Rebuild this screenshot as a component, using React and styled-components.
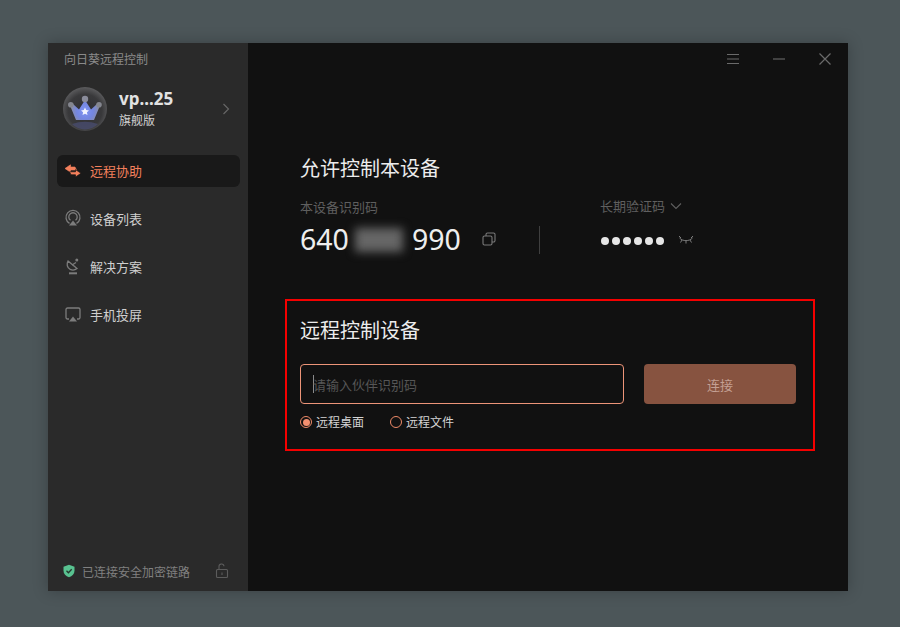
import React from 'react';
import styled, { createGlobalStyle } from 'styled-components';

const GlobalStyle = createGlobalStyle`
  html, body {
    margin: 0;
    padding: 0;
    background: #4c5659;
    font-family: "Noto Sans CJK SC", "Noto Sans", sans-serif;
  }
  * {
    box-sizing: border-box;
  }
`;

const Page = styled.div`
  width: 900px;
  height: 627px;
  padding: 43px 52px 36px 48px;
  background: #4c5659;
  overflow: hidden;
`;

const Window = styled.div`
  width: 800px;
  height: 548px;
  display: flex;
  box-shadow: 0 0 14px rgba(0, 0, 0, 0.25);
`;

const Sidebar = styled.aside`
  width: 200px;
  background: #2a2a2a;
  display: flex;
  flex-direction: column;
`;

const AppTitle = styled.div`
  height: 32px;
  padding-left: 16px;
  font-size: 12px;
  line-height: 32px;
  color: #8a8a8a;
`;

const Profile = styled.div`
  height: 44px;
  margin-top: 12px;
  padding: 0 18px 0 15px;
  display: flex;
  align-items: center;
  gap: 12px;
`;

const Avatar = styled.svg`
  width: 44px;
  height: 44px;
  flex: none;
`;

const ProfileText = styled.div`
  flex: 1;
  display: flex;
  flex-direction: column;
  gap: 2px;
  margin-top: -1px;
`;

const UserName = styled.div`
  font-family: "Noto Sans", sans-serif;
  font-size: 17px;
  line-height: 20px;
  font-weight: 700;
  color: #e2e2e2;
`;

const Plan = styled.div`
  font-size: 12px;
  line-height: 18px;
  color: #d0d0d0;
`;

const Nav = styled.nav`
  margin-top: 24px;
  padding: 0 8px 0 9px;
  display: flex;
  flex-direction: column;
  gap: 16px;
`;

const NavItem = styled.div`
  height: 32px;
  padding: 0 0 2px 7px;
  display: flex;
  align-items: center;
  gap: 8px;
  border-radius: 6px;
  font-size: 13px;
  color: ${p => (p.$active ? '#f4805c' : '#cfcfcf')};
  background: ${p => (p.$active ? '#191919' : 'transparent')};
`;

const NavIcon = styled.svg`
  width: 18px;
  height: 18px;
  flex: none;
`;

const Footer = styled.div`
  margin-top: auto;
  height: 40px;
  padding: 0 19px 0 14px;
  display: flex;
  align-items: center;
  font-size: 12px;
  color: #808080;
`;

const FooterText = styled.span`
  flex: 1;
  margin-left: 6px;
`;

const Main = styled.main`
  flex: 1;
  background: #111111;
  display: flex;
  flex-direction: column;
`;

const TitleBar = styled.div`
  height: 32px;
  padding-right: 16px;
  display: flex;
  justify-content: flex-end;
  align-items: center;
  gap: 32px;
`;

const BarIcon = styled.svg`
  width: 14px;
  height: 14px;
  display: block;
`;

const Content = styled.div`
  padding: 78px 33px 0 37px;
`;

const LocalSection = styled.section`
  padding-left: 15px;
  height: 146px;
`;

const SectionTitle = styled.h2`
  margin: 0;
  font-size: 20px;
  line-height: 30px;
  font-weight: 400;
  color: #ececec;
`;

const InfoRow = styled.div`
  margin-top: 14px;
  display: flex;
`;

const IdColumn = styled.div`
  width: 239px;
`;

const FieldLabel = styled.div`
  display: flex;
  align-items: center;
  gap: 5px;
  font-size: 13px;
  line-height: 20px;
  color: #5f5f5f;
`;

const IdLine = styled.div`
  margin-top: 4px;
  height: 36px;
  display: flex;
  align-items: center;
  font-family: "Noto Sans", sans-serif;
  font-size: 28.5px;
  color: #eeeeee;
`;

const BlurredDigits = styled.div`
  width: 48px;
  height: 24px;
  margin: 2px 9px 0 6px;
  background: #666666;
  filter: blur(5px);
`;

const CopyIcon = styled.svg`
  width: 16px;
  height: 16px;
  margin-left: 20px;
`;

const Divider = styled.div`
  width: 1px;
  height: 28px;
  margin-top: 29px;
  background: #3f3f3f;
`;

const CodeColumn = styled.div`
  margin-left: 60px;
  margin-top: -1px;
`;

const CodeLine = styled.div`
  margin: 7px 0 0 1px;
  height: 36px;
  display: flex;
  align-items: center;
`;

const Dot = styled.span`
  width: 8px;
  height: 8px;
  margin-right: 3px;
  border-radius: 50%;
  background: #e6e6e6;
`;

const EyeIcon = styled.svg`
  width: 16px;
  height: 10px;
  margin-left: 11px;
  margin-top: -2px;
`;

const RemoteSection = styled.section`
  width: 530px;
  height: 152px;
  padding: 14px 13px 0 13px;
  border: 2px solid #f50000;
`;

const ConnectRow = styled.div`
  margin-top: 19px;
  display: flex;
  gap: 20px;
`;

const PartnerInput = styled.div`
  width: 324px;
  height: 40px;
  padding-left: 12px;
  display: flex;
  align-items: center;
  border: 1px solid #ec9478;
  border-radius: 4px;
  font-size: 13px;
  color: #565656;
`;

const Caret = styled.span`
  width: 1px;
  height: 18px;
  margin-right: -1px;
  background: #8a8a8a;
`;

const ConnectButton = styled.button`
  width: 152px;
  height: 40px;
  padding: 0;
  border: none;
  border-radius: 4px;
  background: #875340;
  font-family: inherit;
  font-size: 13px;
  color: #c4a093;
`;

const ModeRow = styled.div`
  margin-top: 9px;
  display: flex;
  gap: 26px;
`;

const ModeOption = styled.label`
  display: flex;
  align-items: center;
  gap: 4px;
  font-size: 12px;
  line-height: 18px;
  color: #d4d4d4;
`;

const RadioMark = styled.span`
  width: 12px;
  height: 12px;
  display: flex;
  align-items: center;
  justify-content: center;
  border: 1.5px solid #ee8a68;
  border-radius: 50%;

  &::after {
    content: '';
    width: 7px;
    height: 7px;
    border-radius: 50%;
    background: ${p => (p.$checked ? '#f49070' : 'transparent')};
  }
`;

const NAV_ICONS = {
  remote: (
    <g strokeLinejoin="round">
      <path d="M1 7.500 6.500 3.800V6H11l1.500 3h-6v2.200z" fill="#f4805c" stroke="#f4805c" strokeWidth="0.6" />
      <path d="M17 12.300 11.500 16v-2.200H7L5.500 10.800h6V8.600z" fill="#f4805c" stroke="#191919" strokeWidth="0.7" />
    </g>
  ),
  devices: (
    <g fill="none" stroke="#7c7c7c" strokeWidth="1.300">
      <path d="M5.500 14.400a7 7 0 1 1 7 0" />
      <path d="M6.500 11.300a4.200 4.200 0 1 1 5 0" />
      <path d="M5 16.500h8L9 11.500z" fill="#7c7c7c" stroke="none" />
    </g>
  ),
  solutions: (
    <g fill="none" stroke="#7c7c7c" strokeWidth="1.300">
      <path d="M4 4c-1.800 3-.800 6.800 2.200 8.400 2.200 1.100 4.800.800 6.800-.900z" />
      <path d="M8 8l4-2.500" />
      <circle cx="12.800" cy="3" r="1.500" fill="#7c7c7c" stroke="none" />
      <path d="M5 16.300h8" strokeWidth="2" />
    </g>
  ),
  mirror: (
    <g fill="none" stroke="#7c7c7c" strokeWidth="1.300">
      <path d="M5 14H3.500A1.500 1.500 0 0 1 2 12.500V4.500A1.500 1.500 0 0 1 3.500 3h11A1.500 1.500 0 0 1 16 4.500v8a1.500 1.500 0 0 1-1.500 1.500H13" />
      <path d="M5 16.500h8L9 11.500z" fill="#7c7c7c" stroke="none" />
    </g>
  ),
};

const NAV_ITEMS = [
  { key: 'remote', label: '远程协助', active: true },
  { key: 'devices', label: '设备列表' },
  { key: 'solutions', label: '解决方案' },
  { key: 'mirror', label: '手机投屏' },
];

const CrownAvatar = () => (
  <Avatar viewBox="0 0 44 44">
    <defs>
      <radialGradient id="ball" cx="50%" cy="55%" r="55%">
        <stop offset="0%" stopColor="#2e2e32" />
        <stop offset="70%" stopColor="#39393b" />
        <stop offset="100%" stopColor="#5c5c5e" />
      </radialGradient>
      <radialGradient id="crown" gradientUnits="userSpaceOnUse" cx="22" cy="24" r="15">
        <stop offset="0%" stopColor="#7f94f4" />
        <stop offset="55%" stopColor="#7486e0" />
        <stop offset="100%" stopColor="#8d8f9e" />
      </radialGradient>
    </defs>
    <circle cx="22" cy="22" r="22" fill="url(#ball)" />
    <path d="M9 37a18 18 0 0 0 26 0 22 10 0 0 0-26 0z" fill="#4a4e72" opacity="0.75" />
    <path d="M7 18.500 10 17 16 22.500 22 13l6 9.500 6-5.500 3 1.500-6 14.500H13z" fill="url(#crown)" />
    <circle cx="22" cy="12" r="3.200" fill="#8a8c9b" />
    <circle cx="7.800" cy="17.800" r="2.800" fill="#84868f" />
    <circle cx="36" cy="17.800" r="2.800" fill="#84868f" />
    <path d="M22 20.500l1.200 2.600 2.800.300-2.100 1.900.600 2.800-2.500-1.400-2.500 1.400.600-2.800-2.100-1.900 2.800-.300z" fill="#f2f4ff" />
  </Avatar>
);

const App = () => (
  <>
    <GlobalStyle />
    <Page>
      <Window>
        <Sidebar>
          <AppTitle>向日葵远程控制</AppTitle>
          <Profile>
            <CrownAvatar />
            <ProfileText>
              <UserName>vp...25</UserName>
              <Plan>旗舰版</Plan>
            </ProfileText>
            <svg width="8" height="12" viewBox="0 0 8 12" fill="none" stroke="#666" strokeWidth="1.200">
              <path d="M1.500 1l5 5-5 5" />
            </svg>
          </Profile>
          <Nav>
            {NAV_ITEMS.map(item => (
              <NavItem key={item.key} $active={item.active}>
                <NavIcon viewBox="0 0 18 18">{NAV_ICONS[item.key]}</NavIcon>
                {item.label}
              </NavItem>
            ))}
          </Nav>
          <Footer>
            <svg width="14" height="14" viewBox="0 0 14 14">
              <path d="M7 .800 12.500 2.800v4c0 3.200-2.300 5.400-5.500 6.400C3.800 12.200 1.500 10 1.500 6.800v-4z" fill="#58c290" />
              <path d="M4.500 6.800 6.400 8.700 9.700 5.300" fill="none" stroke="#24382e" strokeWidth="1.300" />
            </svg>
            <FooterText>已连接安全加密链路</FooterText>
            <svg width="14" height="16" viewBox="0 0 14 16" fill="none" stroke="#5c5c5c" strokeWidth="1.100">
              <rect x="1.500" y="6.500" width="11" height="8" rx="1" />
              <path d="M4 6.500V3.800a2.500 2.500 0 0 1 5-.500" />
              <path d="M7 9.500v2.500" />
            </svg>
          </Footer>
        </Sidebar>
        <Main>
          <TitleBar>
            <BarIcon viewBox="0 0 14 14" fill="none" stroke="#6a6a6a" strokeWidth="1.100">
              <path d="M1 2.500h12M1 7h12M1 11.500h12" />
            </BarIcon>
            <BarIcon viewBox="0 0 14 14" fill="none" stroke="#6a6a6a" strokeWidth="1.100">
              <path d="M1 7h12" />
            </BarIcon>
            <BarIcon viewBox="0 0 14 14" fill="none" stroke="#6a6a6a" strokeWidth="1.200">
              <path d="M1.500 1.500l11 11M12.500 1.500l-11 11" />
            </BarIcon>
          </TitleBar>
          <Content>
            <LocalSection>
              <SectionTitle>允许控制本设备</SectionTitle>
              <InfoRow>
                <IdColumn>
                  <FieldLabel>本设备识别码</FieldLabel>
                  <IdLine>
                    640
                    <BlurredDigits />
                    990
                    <CopyIcon viewBox="0 0 16 16" fill="none" stroke="#7a7a7a" strokeWidth="1.100">
                      <rect x="2" y="5" width="9" height="9" rx="1.500" />
                      <path d="M5 5V3.500A1.500 1.500 0 0 1 6.500 2h6A1.500 1.500 0 0 1 14 3.500v6a1.500 1.500 0 0 1-1.500 1.500H11" />
                    </CopyIcon>
                  </IdLine>
                </IdColumn>
                <Divider />
                <CodeColumn>
                  <FieldLabel>
                    长期验证码
                    <svg width="12" height="8" viewBox="0 0 12 8" fill="none" stroke="#5f5f5f" strokeWidth="1.100">
                      <path d="M1 1.500l5 5 5-5" />
                    </svg>
                  </FieldLabel>
                  <CodeLine>
                    {[0, 1, 2, 3, 4, 5].map(i => (
                      <Dot key={i} />
                    ))}
                    <EyeIcon viewBox="0 0 16 10" fill="none" stroke="#7c7c7c" strokeWidth="1">
                      <path d="M1.500 3c3.500 3.500 9.500 3.500 13 0M4 5L2.500 7.500M8 6v2.500M12 5l1.500 2.500M1 1l2 2M15 1l-2 2" />
                    </EyeIcon>
                  </CodeLine>
                </CodeColumn>
              </InfoRow>
            </LocalSection>
            <RemoteSection>
              <SectionTitle>远程控制设备</SectionTitle>
              <ConnectRow>
                <PartnerInput>
                  <Caret />
                  请输入伙伴识别码
                </PartnerInput>
                <ConnectButton>连接</ConnectButton>
              </ConnectRow>
              <ModeRow>
                <ModeOption>
                  <RadioMark $checked />
                  远程桌面
                </ModeOption>
                <ModeOption>
                  <RadioMark />
                  远程文件
                </ModeOption>
              </ModeRow>
            </RemoteSection>
          </Content>
        </Main>
      </Window>
    </Page>
  </>
);

export default App;
